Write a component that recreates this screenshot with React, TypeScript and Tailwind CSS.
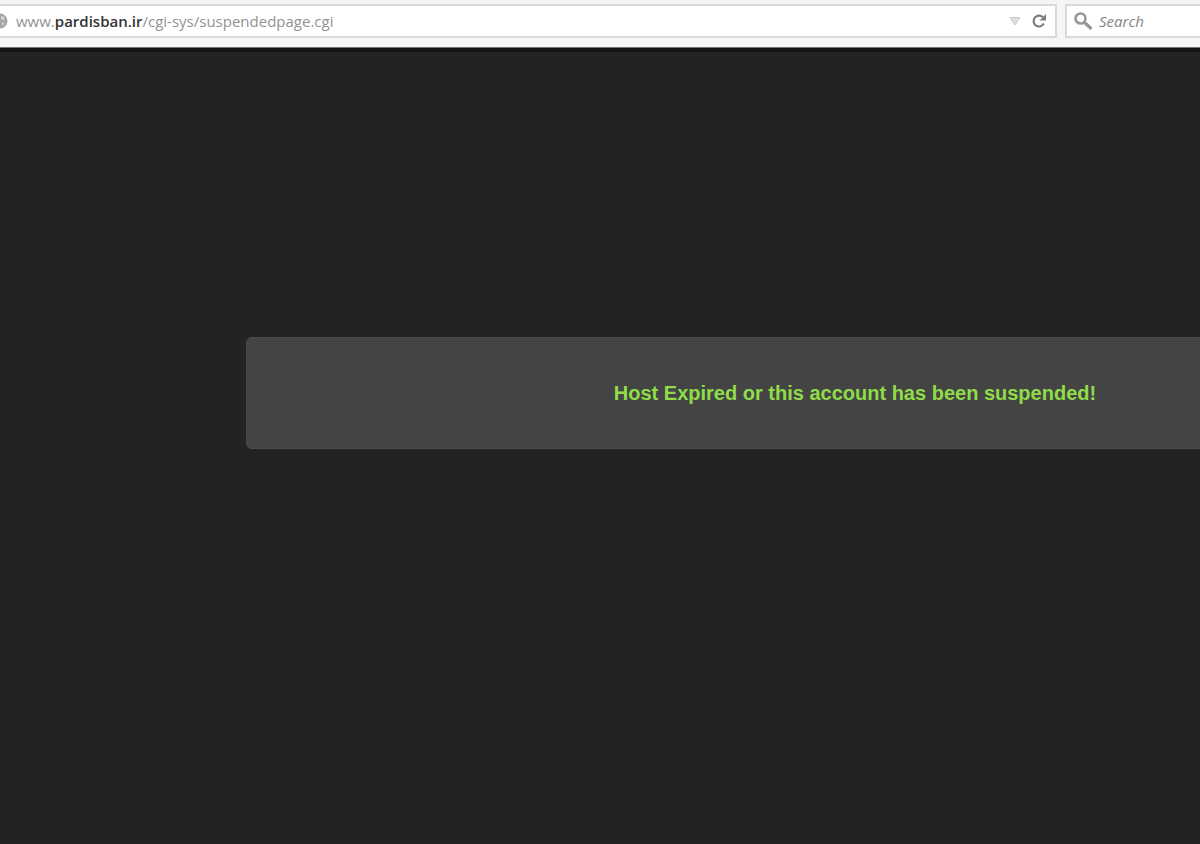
import { useState } from "react";
import type { FormEvent } from "react";

const HOST_PREFIX = "www.";
const DOMAIN = "pardisban.ir";
const PATH = "/cgi-sys/suspendedpage.cgi";

function GlobeIcon() {
  return (
    <svg viewBox="0 0 16 16" className="-ml-2 h-4 w-4 shrink-0" aria-hidden="true">
      <circle cx="8" cy="8" r="7.5" fill="#a6a6a6" />
      <path d="M9 3c1.800.2 3.200 1.200 4 2.800l-1.800 1-2.200-.6zM10 9.500l2.500.3-1.300 2.200-1.200.6z" fill="#d6d6d6" />
    </svg>
  );
}

function ReloadIcon() {
  return (
    <svg viewBox="0 0 16 16" className="h-4 w-4" aria-hidden="true">
      <path d="M11.800 4.200A5.400 5.400 0 1 0 12.800 10.600" fill="none" stroke="#7c7c7c" strokeWidth="2.2" />
      <path d="M15 1v6.500H8.500z" fill="#7c7c7c" />
    </svg>
  );
}

function SearchIcon() {
  return (
    <svg viewBox="0 0 20 20" className="h-5 w-5 shrink-0" aria-hidden="true">
      <circle cx="7.5" cy="7.5" r="5" fill="none" stroke="#989898" strokeWidth="2.6" />
      <path d="M11.500 11.500l6 5.500" stroke="#989898" strokeWidth="3.2" strokeLinecap="round" />
    </svg>
  );
}

function Toolbar() {
  const [url, setUrl] = useState(HOST_PREFIX + DOMAIN + PATH);
  const isOriginal = url === HOST_PREFIX + DOMAIN + PATH;

  function onSubmit(event: FormEvent) {
    event.preventDefault();
  }

  return (
    <header className="flex h-12 shrink-0 items-start gap-2 border-b border-[#777] bg-[#f5f5f5] pt-1 font-['Open_Sans','Noto_Sans',sans-serif]">
      <form
        onSubmit={onSubmit}
        className="flex h-[34px] min-w-0 flex-1 items-center border-2 border-l-0 border-[#dadada] bg-white pr-1"
      >
        <GlobeIcon />
        <div className="relative ml-2 min-w-0 flex-1 text-[15px] leading-6">
          <input
            aria-label="Address"
            value={url}
            onChange={(event) => setUrl(event.target.value)}
            className={
              isOriginal
                ? "peer block w-full text-transparent outline-none focus:text-[#555]"
                : "block w-full text-[#555] outline-none"
            }
          />
          {/* Host stands out until the field is being edited */}
          {isOriginal && (
            <div className="pointer-events-none absolute inset-0 truncate text-[#929292] peer-focus:hidden" aria-hidden="true">
              {HOST_PREFIX}
              <span className="font-semibold text-[#333]">{DOMAIN}</span>
              {PATH}
            </div>
          )}
        </div>
        <button type="button" aria-label="Show history" className="flex h-6 w-6 items-center justify-center">
          <svg viewBox="0 0 12 10" className="h-[10px] w-3" aria-hidden="true">
            <path d="M1 1.500h10L6 9z" fill="#dedede" stroke="#cbcbcb" />
          </svg>
        </button>
        <button type="submit" aria-label="Reload" className="flex h-6 w-6 items-center justify-center">
          <ReloadIcon />
        </button>
      </form>
      <form
        onSubmit={onSubmit}
        className="flex h-[34px] w-[135px] shrink-0 items-center gap-1.5 border-2 border-r-0 border-[#dadada] bg-white pl-1.5"
      >
        <SearchIcon />
        <input
          aria-label="Search"
          placeholder="Search"
          className="w-full min-w-0 text-[15px] leading-6 outline-none placeholder:text-[#858585] placeholder:italic"
        />
      </form>
    </header>
  );
}

export default function App() {
  return (
    <div className="flex min-h-screen flex-col overflow-hidden bg-[#232323]">
      <Toolbar />
      <main className="flex-1 border-t-4 border-[#141414] pt-[285px]">
        <section className="-mr-[22%] ml-[20.5%] flex h-28 items-center justify-center rounded-md border border-[#4b4b4b] bg-[#444]">
          <h1 className="font-['Liberation_Sans',Arial,sans-serif] text-[20px] leading-6 font-bold text-[#8fdc48]">
            Host Expired or this account has been suspended!
          </h1>
        </section>
      </main>
    </div>
  );
}
